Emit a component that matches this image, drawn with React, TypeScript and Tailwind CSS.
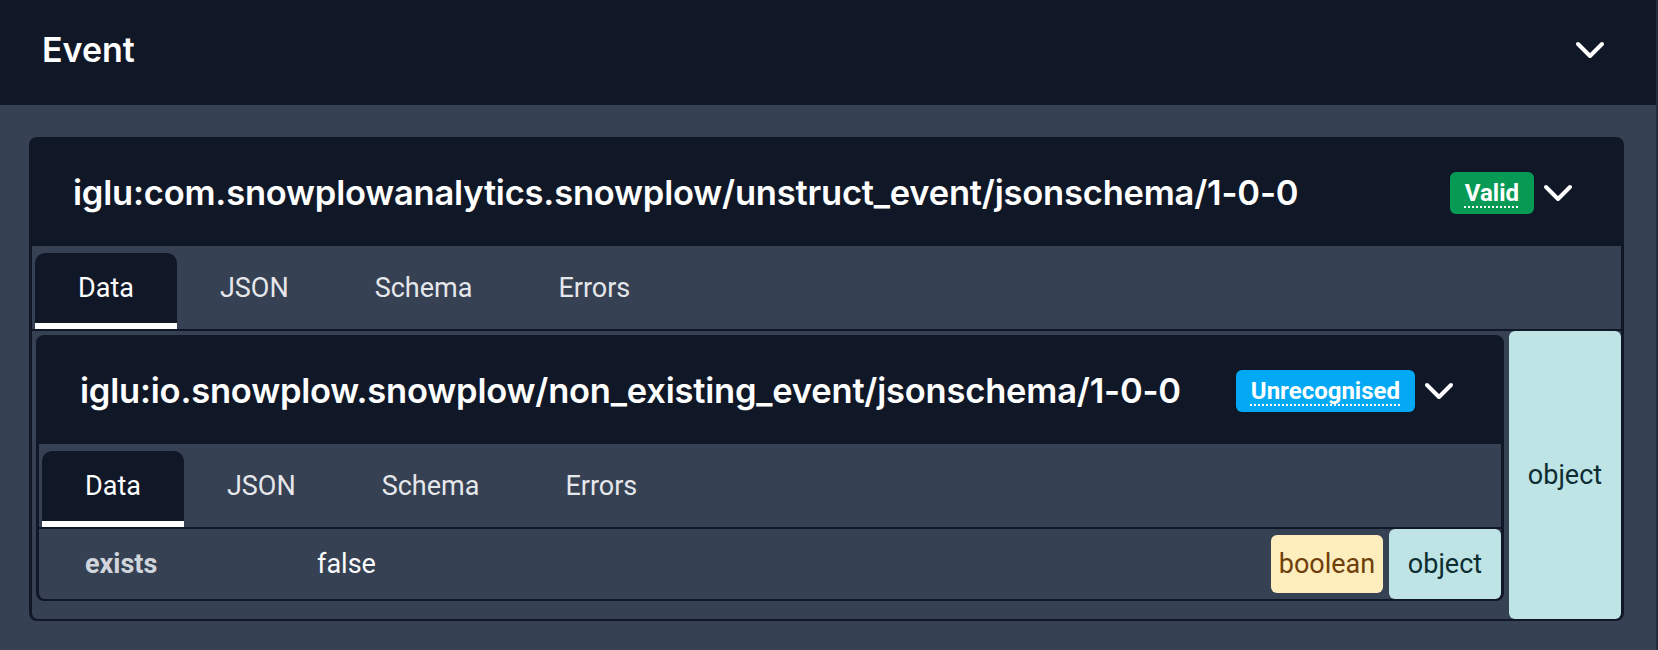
import { ChevronDown } from 'lucide-react';

const TABS = ['Data', 'JSON', 'Schema', 'Errors'];

function TabBar() {
  return (
    <div className="flex bg-gray-700 px-[3px] pt-[7px] border-b-2 border-gray-900">
      {TABS.map((t, i) => (
        <button
          key={t}
          className={`h-[76px] px-[43px] border-b-[6px] rounded-t-[10px] text-[27px] leading-none ${
            i === 0 ? 'bg-gray-900 border-white text-white' : 'border-transparent text-gray-200'
          }`}
        >
          {t}
        </button>
      ))}
    </div>
  );
}

function Status({ label, color }: { label: string; color: string }) {
  return (
    <span className={`flex h-[42px] items-center rounded-md px-[15px] text-[24px] font-bold text-white font-[Roboto,sans-serif] ${color}`}>
      <abbr title={label} className="underline decoration-dotted decoration-2 underline-offset-[5px]">
        {label}
      </abbr>
    </span>
  );
}

function TypeBadge({ type, className }: { type: string; className: string }) {
  return (
    <div className={`flex w-[112px] shrink-0 items-center justify-center rounded-md text-[27px] ${className}`}>
      {type}
    </div>
  );
}

function SchemaCard({
  schema,
  status,
  statusColor,
  pr,
  children,
}: {
  schema: string;
  status: string;
  statusColor: string;
  pr: string;
  children: React.ReactNode;
}) {
  return (
    <div className="rounded-lg bg-gray-900 p-[3px] pb-[2px]">
      <div className={`flex h-[106px] items-center pl-[41px] ${pr}`}>
        <h3 className="text-[34.5px] font-semibold text-white font-[Inter,sans-serif] tracking-[-0.2px]">{schema}</h3>
        <div className="ml-auto flex items-center">
          <Status label={status} color={statusColor} />
          <ChevronDown size={48} strokeWidth={2} className="text-white" />
        </div>
      </div>
      <TabBar />
      {children}
    </div>
  );
}

export default function App() {
  return (
    <div className="h-[650px] bg-gray-700 border-r-2 border-[#252e3c] font-[Roboto,sans-serif]">
      <div className="flex h-[105px] items-center bg-gray-900 pl-[42px] pr-[42px] pb-[6px]">
        <h2 className="text-[34px] font-semibold text-white font-[Inter,sans-serif]">Event</h2>
        <ChevronDown size={48} strokeWidth={2} className="ml-auto text-white" />
      </div>

      <div className="pl-[29px] pr-[32px] pt-[32px]">
        <SchemaCard
          schema="iglu:com.snowplowanalytics.snowplow/unstruct_event/jsonschema/1-0-0"
          status="Valid"
          statusColor="bg-[#079a55]"
          pr="pr-[39px]"
        >
          <div className="flex rounded-b-md bg-gray-700">
            <div className="flex-1 p-[4px] pr-[5px] pb-[18px]">
              <SchemaCard
                schema="iglu:io.snowplow.snowplow/non_existing_event/jsonschema/1-0-0"
                status="Unrecognised"
                statusColor="bg-[#03a9f4]"
                pr="pr-[38px]"
              >
                <div className="flex h-[70px] rounded-b-md bg-gray-700">
                  <div className="flex flex-1 items-center">
                    <div className="w-[232px] pl-[46px] text-[27px] font-bold text-gray-300">exists</div>
                    <div className="pl-[46px] text-[27px] text-gray-50">false</div>
                    <TypeBadge type="boolean" className="ml-auto my-[6px] mr-[6px] self-stretch bg-[#feeebd] text-[#6f3f0b]" />
                  </div>
                  <TypeBadge type="object" className="bg-[#bee4e6] text-[#0d2d31]" />
                </div>
              </SchemaCard>
            </div>
            <TypeBadge type="object" className="bg-[#bee4e6] text-[#0d2d31]" />
          </div>
        </SchemaCard>
      </div>
    </div>
  );
}
